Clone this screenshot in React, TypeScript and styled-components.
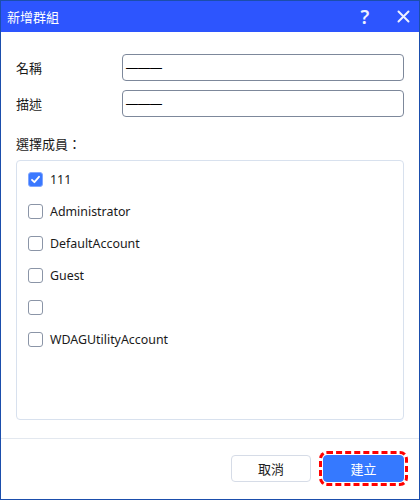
import React from "react";
import styled, { createGlobalStyle } from "styled-components";

const Global = createGlobalStyle`
  * { box-sizing: border-box; }
  html, body { margin: 0; padding: 0; background: #ffffff; }
  body { font-family: "Noto Sans", "Noto Sans CJK TC", sans-serif; }
`;

const Window = styled.div`
  width: 420px;
  height: 500px;
  border: 1px solid #1b4eac;
  display: flex;
  flex-direction: column;
  background: #ffffff;
`;

const TitleBar = styled.div`
  height: 31px;
  background: #2d55fe;
  display: flex;
  align-items: center;
  padding-left: 6px;
  color: #ffffff;
  flex: none;
`;

const Title = styled.div`
  flex: 1;
  font-family: "Noto Sans CJK TC", sans-serif;
  font-size: 13px;
`;

const TitleButton = styled.button<{ $w: number }>`
  width: ${(p) => p.$w}px;
  height: 31px;
  border: none;
  background: transparent;
  color: #eef1ff;
  display: flex;
  align-items: center;
  justify-content: center;
  padding: 0;
  font-family: "Noto Sans", sans-serif;
  font-size: 19px;
  font-weight: 600;
`;

const Body = styled.div`
  flex: 1;
  padding: 22px 15px 0 15px;
  display: flex;
  flex-direction: column;
`;

const FieldRow = styled.div`
  display: grid;
  grid-template-columns: 106px 1fr;
  align-items: center;
  margin-bottom: 9px;
`;

const Label = styled.label`
  font-family: "Noto Sans CJK TC", sans-serif;
  font-size: 13px;
  color: #1a1a1a;
`;

const Input = styled.div`
  height: 27px;
  border: 1px solid #7d889b;
  border-radius: 4px;
  display: flex;
  align-items: center;
  padding-left: 3px;
  font-family: "Liberation Sans", sans-serif;
  font-size: 12px;
  color: #000000;
`;

const SectionLabel = styled.div`
  font-family: "Noto Sans CJK TC", sans-serif;
  font-size: 13px;
  color: #1a1a1a;
  margin-top: 8px;
  margin-bottom: 6px;
  line-height: 20px;
`;

const ListBox = styled.div`
  height: 260px;
  border: 1px solid #d8e1ee;
  border-radius: 4px;
  padding: 2px 11px;
  display: flex;
  flex-direction: column;
`;

const Item = styled.div`
  height: 32px;
  display: flex;
  align-items: center;
  gap: 7px;
  font-family: "Noto Sans", "Noto Sans CJK TC", sans-serif;
  font-size: 12.4px;
  color: #1a1a1a;
`;

const Box = styled.span<{ $checked: boolean }>`
  width: 15px;
  height: 15px;
  border-radius: 3px;
  flex: none;
  border: 1px solid ${(p) => (p.$checked ? "#7fa6ff" : "#8b95a7")};
  background: ${(p) => (p.$checked ? "#3a78ff" : "#ffffff")};
  display: flex;
  align-items: center;
  justify-content: center;
`;

const Divider = styled.div`
  height: 1px;
  background: #e3e8ef;
  flex: none;
`;

const Footer = styled.div`
  display: flex;
  justify-content: flex-end;
  gap: 12px;
  padding: 16px 15px 17px 15px;
`;

const Button = styled.button<{ $primary?: boolean }>`
  width: ${(p) => (p.$primary ? "81px" : "80px")};
  height: 27px;
  border-radius: 4px;
  font-family: "Noto Sans CJK TC", sans-serif;
  font-size: 13px;
  padding: 0;
  border: 1px solid ${(p) => (p.$primary ? "#3579ff" : "#d6dce7")};
  background: ${(p) => (p.$primary ? "#3579ff" : "#ffffff")};
  color: ${(p) => (p.$primary ? "#ffffff" : "#222222")};
  outline: ${(p) => (p.$primary ? "3px dashed #ff0000" : "none")};
  outline-offset: 1px;
`;

const members = [
  { name: "111", checked: true },
  { name: "Administrator", checked: false },
  { name: "DefaultAccount", checked: false },
  { name: "Guest", checked: false },
  { name: "", checked: false },
  { name: "WDAGUtilityAccount", checked: false },
];

export default function App() {
  return (
    <>
      <Global />
      <Window>
        <TitleBar>
          <Title>新增群組</Title>
          <TitleButton $w={44}>?</TitleButton>
          <TitleButton $w={32}>
            <svg width="13" height="13" viewBox="0 0 13 13">
              <path d="M1.5 1.5 L11.5 11.5 M11.5 1.5 L1.5 11.5" stroke="#eef1ff" strokeWidth="2" strokeLinecap="round" />
            </svg>
          </TitleButton>
        </TitleBar>
        <Body>
          <FieldRow>
            <Label>名稱</Label>
            <Input>———</Input>
          </FieldRow>
          <FieldRow>
            <Label>描述</Label>
            <Input>———</Input>
          </FieldRow>
          <SectionLabel>選擇成員：</SectionLabel>
          <ListBox>
            {members.map((m, i) => (
              <Item key={i}>
                <Box $checked={m.checked}>
                  {m.checked && (
                    <svg width="11" height="11" viewBox="0 0 11 11">
                      <path d="M2 5.8 L4.4 8.2 L9 2.8" stroke="#ffffff" strokeWidth="1.8" fill="none" strokeLinecap="round" strokeLinejoin="round" />
                    </svg>
                  )}
                </Box>
                <span>{m.name}</span>
              </Item>
            ))}
          </ListBox>
        </Body>
        <Divider />
        <Footer>
          <Button>取消</Button>
          <Button $primary>建立</Button>
        </Footer>
      </Window>
    </>
  );
}
